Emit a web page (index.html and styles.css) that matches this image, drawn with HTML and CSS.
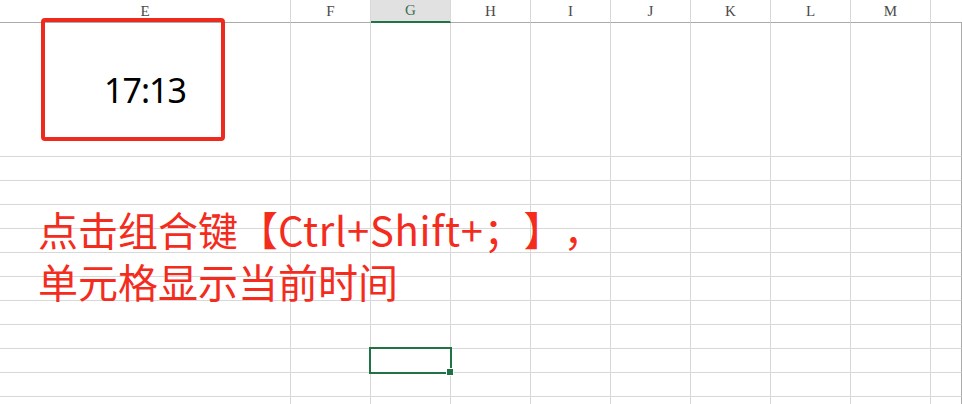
FILE: index.html
```html
<html>
<head>
<title>时间快捷键</title>
<meta name="viewport" content="width=device-width">
<link rel="stylesheet" href="styles.css">
</head>
<body>

<div class="sheet">
  <div class="head">E</div><div class="head">F</div><div class="head sel">G</div><div class="head">H</div><div class="head">I</div><div class="head">J</div><div class="head">K</div><div class="head">L</div><div class="head">M</div><div class="head last"></div>

  <div class="cell time">17:13</div><div class="cell"></div><div class="cell"></div><div class="cell"></div><div class="cell"></div><div class="cell"></div><div class="cell"></div><div class="cell"></div><div class="cell"></div><div class="cell last"></div>
  <div class="cell"></div><div class="cell"></div><div class="cell"></div><div class="cell"></div><div class="cell"></div><div class="cell"></div><div class="cell"></div><div class="cell"></div><div class="cell"></div><div class="cell last"></div>
  <div class="cell"></div><div class="cell"></div><div class="cell"></div><div class="cell"></div><div class="cell"></div><div class="cell"></div><div class="cell"></div><div class="cell"></div><div class="cell"></div><div class="cell last"></div>
  <div class="cell"></div><div class="cell"></div><div class="cell"></div><div class="cell"></div><div class="cell"></div><div class="cell"></div><div class="cell"></div><div class="cell"></div><div class="cell"></div><div class="cell last"></div>
  <div class="cell"></div><div class="cell"></div><div class="cell"></div><div class="cell"></div><div class="cell"></div><div class="cell"></div><div class="cell"></div><div class="cell"></div><div class="cell"></div><div class="cell last"></div>
  <div class="cell"></div><div class="cell"></div><div class="cell"></div><div class="cell"></div><div class="cell"></div><div class="cell"></div><div class="cell"></div><div class="cell"></div><div class="cell"></div><div class="cell last"></div>
  <div class="cell"></div><div class="cell"></div><div class="cell"></div><div class="cell"></div><div class="cell"></div><div class="cell"></div><div class="cell"></div><div class="cell"></div><div class="cell"></div><div class="cell last"></div>
  <div class="cell"></div><div class="cell"></div><div class="cell"></div><div class="cell"></div><div class="cell"></div><div class="cell"></div><div class="cell"></div><div class="cell"></div><div class="cell"></div><div class="cell last"></div>
  <div class="cell"></div><div class="cell"></div><div class="cell"></div><div class="cell"></div><div class="cell"></div><div class="cell"></div><div class="cell"></div><div class="cell"></div><div class="cell"></div><div class="cell last"></div>
  <div class="cell"></div><div class="cell"></div><div class="cell active"></div><div class="cell"></div><div class="cell"></div><div class="cell"></div><div class="cell"></div><div class="cell"></div><div class="cell"></div><div class="cell last"></div>
  <div class="cell"></div><div class="cell"></div><div class="cell"></div><div class="cell"></div><div class="cell"></div><div class="cell"></div><div class="cell"></div><div class="cell"></div><div class="cell"></div><div class="cell last"></div>
  <div class="cell"></div><div class="cell"></div><div class="cell"></div><div class="cell"></div><div class="cell"></div><div class="cell"></div><div class="cell"></div><div class="cell"></div><div class="cell"></div><div class="cell last"></div>
</div>

<div class="mark"></div>

<div class="note">
  <p>点击组合键【<span class="keys">Ctrl+Shift+</span>；】，</p>
  <p>单元格显示当前时间</p>
</div>

</body>
</html>
```

FILE: styles.css
```css
* {
  box-sizing: border-box;
}

body {
  margin: 0;
  background: #fff;
  overflow: hidden;
  font-family: "Noto Sans CJK SC", "Noto Sans", sans-serif;
}

.sheet {
  display: grid;
  grid-template-columns: 291px repeat(8, 80px) 31px;
  grid-template-rows: 23px 134px repeat(11, 24px);
  width: 962px;
}

.head {
  border-right: 1px solid #d8d8d8;
  border-bottom: 1px solid #ababab;
  font-family: "Liberation Serif", serif;
  font-size: 15px;
  color: #4a4a4a;
  text-align: center;
  line-height: 22px;
}

.head.sel {
  background: #e1e1e1;
  border-bottom: 2px solid #217346;
  color: #3c6e50;
  line-height: 21px;
}

.head.last {
  border-right: none;
}

.cell {
  border-right: 1px solid #d8d8d8;
  border-bottom: 1px solid #d8d8d8;
}

.cell.last {
  border-right: 1px solid #ababab;
}

.time {
  display: flex;
  align-items: center;
  justify-content: center;
  font-family: "Noto Sans", sans-serif;
  font-size: 34px;
  letter-spacing: -1px;
  color: #000;
}

.active {
  position: relative;
}

.active:before {
  content: "";
  position: absolute;
  top: -2px;
  left: -2px;
  right: -2px;
  bottom: -2px;
  border: 2px solid #217346;
}

.active:after {
  content: "";
  position: absolute;
  right: -4px;
  bottom: -4px;
  width: 6px;
  height: 6px;
  background: #217346;
  border: 1px solid #fff;
}

.mark {
  position: absolute;
  left: 41px;
  top: 18px;
  width: 184px;
  height: 123px;
  border: 4px solid #ee2a1f;
  border-radius: 4px;
}

.note {
  position: absolute;
  left: 38px;
  top: 203px;
  color: #f32c1e;
  font-size: 40px;
  line-height: 52px;
  text-spacing-trim: space-all;
  font-feature-settings: "halt" 0, "chws" 0;
}

.note p {
  margin: 0;
  white-space: nowrap;
}

.keys {
  letter-spacing: 0.7px;
}
```
